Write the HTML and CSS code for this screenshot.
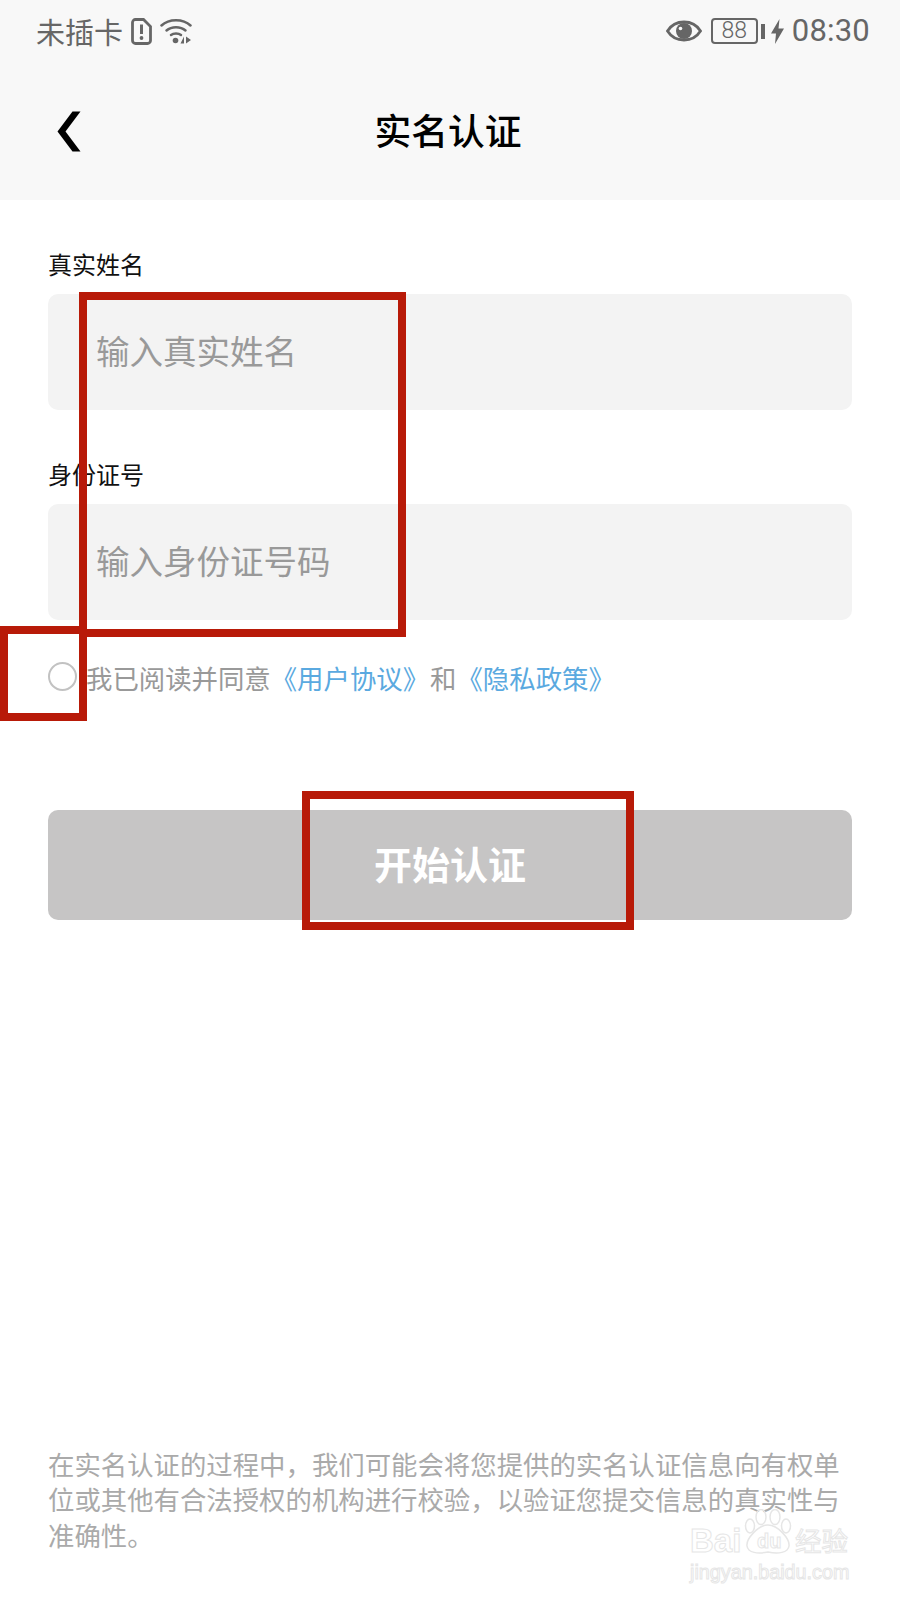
FILE: index.html
```html
<!DOCTYPE html>
<html lang="zh-CN">
<head>
<meta charset="utf-8">
<title>实名认证</title>
<link rel="stylesheet" href="styles.css">
</head>
<body>
<div class="page">
  <header class="top">
    <div class="status">
      <div class="status-left">
        <span class="carrier">未插卡</span>
        <svg class="sim" width="21" height="27" viewBox="0 0 21 27"><path d="M4.500 1.500h8l7 7v14a3 3 0 0 1-3 3h-12a3 3 0 0 1-3-3v-18a3 3 0 0 1 3-3z" fill="none" stroke="#666" stroke-width="2.800"/><path d="M10.500 6.500v9.500" stroke="#666" stroke-width="3"/><circle cx="10.500" cy="20" r="1.900" fill="#666"/></svg>
        <svg class="wifi" width="33" height="26" viewBox="0 0 33 26"><g fill="none" stroke="#666" stroke-width="2.500" stroke-linecap="round"><path d="M1.500 7.500C9 .5 23 .5 30.500 7.500"/><path d="M6.500 12.500C11.500 8 20.500 8 25.500 12.500"/><path d="M11 17C13.500 15 18.500 15 21 17"/></g><circle cx="15.500" cy="22.500" r="2.800" fill="#666"/><path d="M24 18.500v7h-3.500zM26 18.500v7l5-3.500z" fill="#666"/></svg>
      </div>
      <div class="status-right">
        <svg class="eye" width="36" height="22" viewBox="0 0 36 22"><path d="M1.500 11C9 -1 27 -1 34.500 11 27 23 9 23 1.500 11z" fill="none" stroke="#666" stroke-width="2.800"/><circle cx="18" cy="11" r="8" fill="#666"/><circle cx="14.500" cy="8.500" r="1.800" fill="#f8f8f8"/></svg>
        <div class="battery"><span class="level">88</span></div>
        <span class="nub"></span>
        <svg class="bolt" width="13" height="25" viewBox="0 0 13 25"><path d="M8.500 0L0 14.500h5L4 25 13 9.500H7.500z" fill="#666"/></svg>
        <span class="time">08:30</span>
      </div>
    </div>
    <nav class="nav">
      <svg class="back" width="24" height="41" viewBox="0 0 24 41"><polygon points="15.500,0.500 23.500,0.500 8.500,20.500 23.500,40.500 15.500,40.500 0.500,20.500" fill="#000"/></svg>
      <h1 class="title">实名认证</h1>
    </nav>
  </header>

  <main class="form">
    <div class="group">
      <div class="label">真实姓名</div>
      <div class="field">输入真实姓名</div>
    </div>
    <div class="group">
      <div class="label">身份证号</div>
      <div class="field">输入身份证号码</div>
    </div>
    <div class="agree">
      <span class="radio"></span>
      <span class="agree-text">我已阅读并同意<a class="link">《用户协议》</a><span class="and">和</span><a class="link">《隐私政策》</a></span>
    </div>
    <div class="submit">开始认证</div>
  </main>

  <footer class="note">在实名认证的过程中，我们可能会将您提供的实名认证信息向有权单位或其他有合法授权的机构进行校验，以验证您提交信息的真实性与准确性。</footer>

  <div class="mark mark-fields"></div>
  <div class="mark mark-radio"></div>
  <div class="mark mark-button"></div>

  <div class="watermark">
    <div class="wm-row">
      <span class="wm-bai">Bai</span>
      <div class="wm-pawbox">
        <svg class="wm-paw" width="50" height="46" viewBox="0 0 50 46"><g fill="none" stroke="#e6e6e6" stroke-width="1.500"><ellipse cx="7" cy="17" rx="4.500" ry="7"/><ellipse cx="18" cy="8" rx="5" ry="7.500"/><ellipse cx="32" cy="8" rx="5" ry="7.500"/><ellipse cx="43" cy="17" rx="4.500" ry="7"/><path d="M25 16C15 16 3 30 4 37 5 44 15 45 25 43 35 45 45 44 46 37 47 30 35 16 25 16z"/></g></svg>
        <span class="wm-du">du</span>
      </div>
      <span class="wm-cn">经验</span>
    </div>
    <div class="wm-url">jingyan.baidu.com</div>
  </div>
</div>
</body>
</html>
```

FILE: styles.css
```css
* { box-sizing: border-box; }
html, body { margin: 0; padding: 0; }
body {
  background: #fff;
  font-family: "Noto Sans CJK SC", "Noto Sans", sans-serif;
}
.page {
  position: relative;
  width: 900px;
  height: 1600px;
  overflow: hidden;
  display: flex;
  flex-direction: column;
}
.top {
  height: 200px;
  background: #f8f8f8;
  display: flex;
  flex-direction: column;
}
.status {
  height: 62px;
  padding: 0 30px 0 36px;
  display: flex;
  justify-content: space-between;
  align-items: center;
  color: #666;
}
.status-left, .status-right { display: flex; align-items: center; }
.carrier { font-size: 29px; line-height: 36px; }
.sim { margin-left: 8px; }
.wifi { margin-left: 8px; }
.eye { display: block; }
.battery {
  margin-left: 9px;
  width: 47px;
  height: 26px;
  border: 2.500px solid #666;
  border-radius: 4px;
  display: flex;
  align-items: center;
  justify-content: center;
}
.level {
  font-family: Roboto, sans-serif;
  font-weight: 300;
  font-size: 23px;
  line-height: 22px;
  color: #666;
}
.nub { margin-left: 3px; width: 4px; height: 15px; background: #666; }
.bolt { margin-left: 6px; }
.time {
  margin-left: 8px;
  font-family: Roboto, sans-serif;
  font-size: 31px;
  line-height: 36px;
  letter-spacing: 0.2px;
}
.nav {
  position: relative;
  height: 138px;
  display: flex;
  align-items: center;
  justify-content: center;
  padding: 0 4px 4px 0;
}
.back { position: absolute; left: 57px; top: 49px; }
.title {
  margin: 0;
  font-size: 36.800px;
  font-weight: 500;
  line-height: 50px;
  color: #000;
}
.form {
  padding: 47px 48px 0;
  display: flex;
  flex-direction: column;
}
.group { margin-bottom: 47px; }
.group:nth-child(2) { margin-bottom: 0; }
.label {
  font-size: 24px;
  line-height: 34px;
  color: #111;
  margin-bottom: 13px;
}
.field {
  height: 116px;
  background: #f3f3f3;
  border-radius: 10px;
  padding: 0 0 6px 48px;
  display: flex;
  align-items: center;
  font-size: 33.500px;
  color: #999;
}
.agree {
  margin-top: 40px;
  height: 36px;
  display: flex;
  align-items: center;
}
.radio {
  width: 29px;
  height: 29px;
  border: 2.500px solid #c2c2c2;
  border-radius: 50%;
  flex: none;
  margin-bottom: 4px;
}
.agree-text {
  margin-left: 9px;
  font-size: 26.400px;
  line-height: 36px;
  color: #999;
  white-space: nowrap;
}
.and { margin-left: 1px; }
.link { color: #5aa9e0; }
.submit {
  margin-top: 114px;
  height: 110px;
  padding-bottom: 6px;
  background: #c6c5c5;
  border-radius: 10px;
  color: #fff;
  font-size: 38px;
  font-weight: 700;
  display: flex;
  align-items: center;
  justify-content: center;
}
.note {
  margin-top: auto;
  padding: 0 48px;
  margin-bottom: 48px;
  font-size: 26.400px;
  line-height: 35.500px;
  color: #aaa;
}
.mark {
  position: absolute;
  border: 8px solid #b81a08;
}
.mark-fields { left: 79px; top: 292px; width: 327px; height: 345px; }
.mark-radio { left: 0; top: 626px; width: 87px; height: 95px; }
.mark-button { left: 302px; top: 791px; width: 332px; height: 139px; }
.watermark {
  position: absolute;
  left: 690px;
  top: 1509px;
  width: 165px;
}
.wm-row { display: flex; align-items: flex-end; height: 46px; }
.wm-bai, .wm-du, .wm-cn, .wm-url {
  color: #fff;
  -webkit-text-stroke: 1px #e6e6e6;
  font-family: "Liberation Sans", sans-serif;
}
.wm-bai { font-size: 33px; line-height: 28px; font-weight: 700; flex: none; width: 53px; }
.wm-pawbox { position: relative; width: 50px; height: 46px; flex: none; }
.wm-paw { display: block; }
.wm-du { position: absolute; left: 14px; top: 20px; font-size: 20px; line-height: 24px; font-weight: 700; }
.wm-cn { margin-left: 2px; font-family: "Noto Sans CJK SC", sans-serif; font-size: 26.500px; line-height: 30px; white-space: nowrap; }
.wm-url { font-size: 19.800px; line-height: 24px; margin-top: 5px; white-space: nowrap; }
```
